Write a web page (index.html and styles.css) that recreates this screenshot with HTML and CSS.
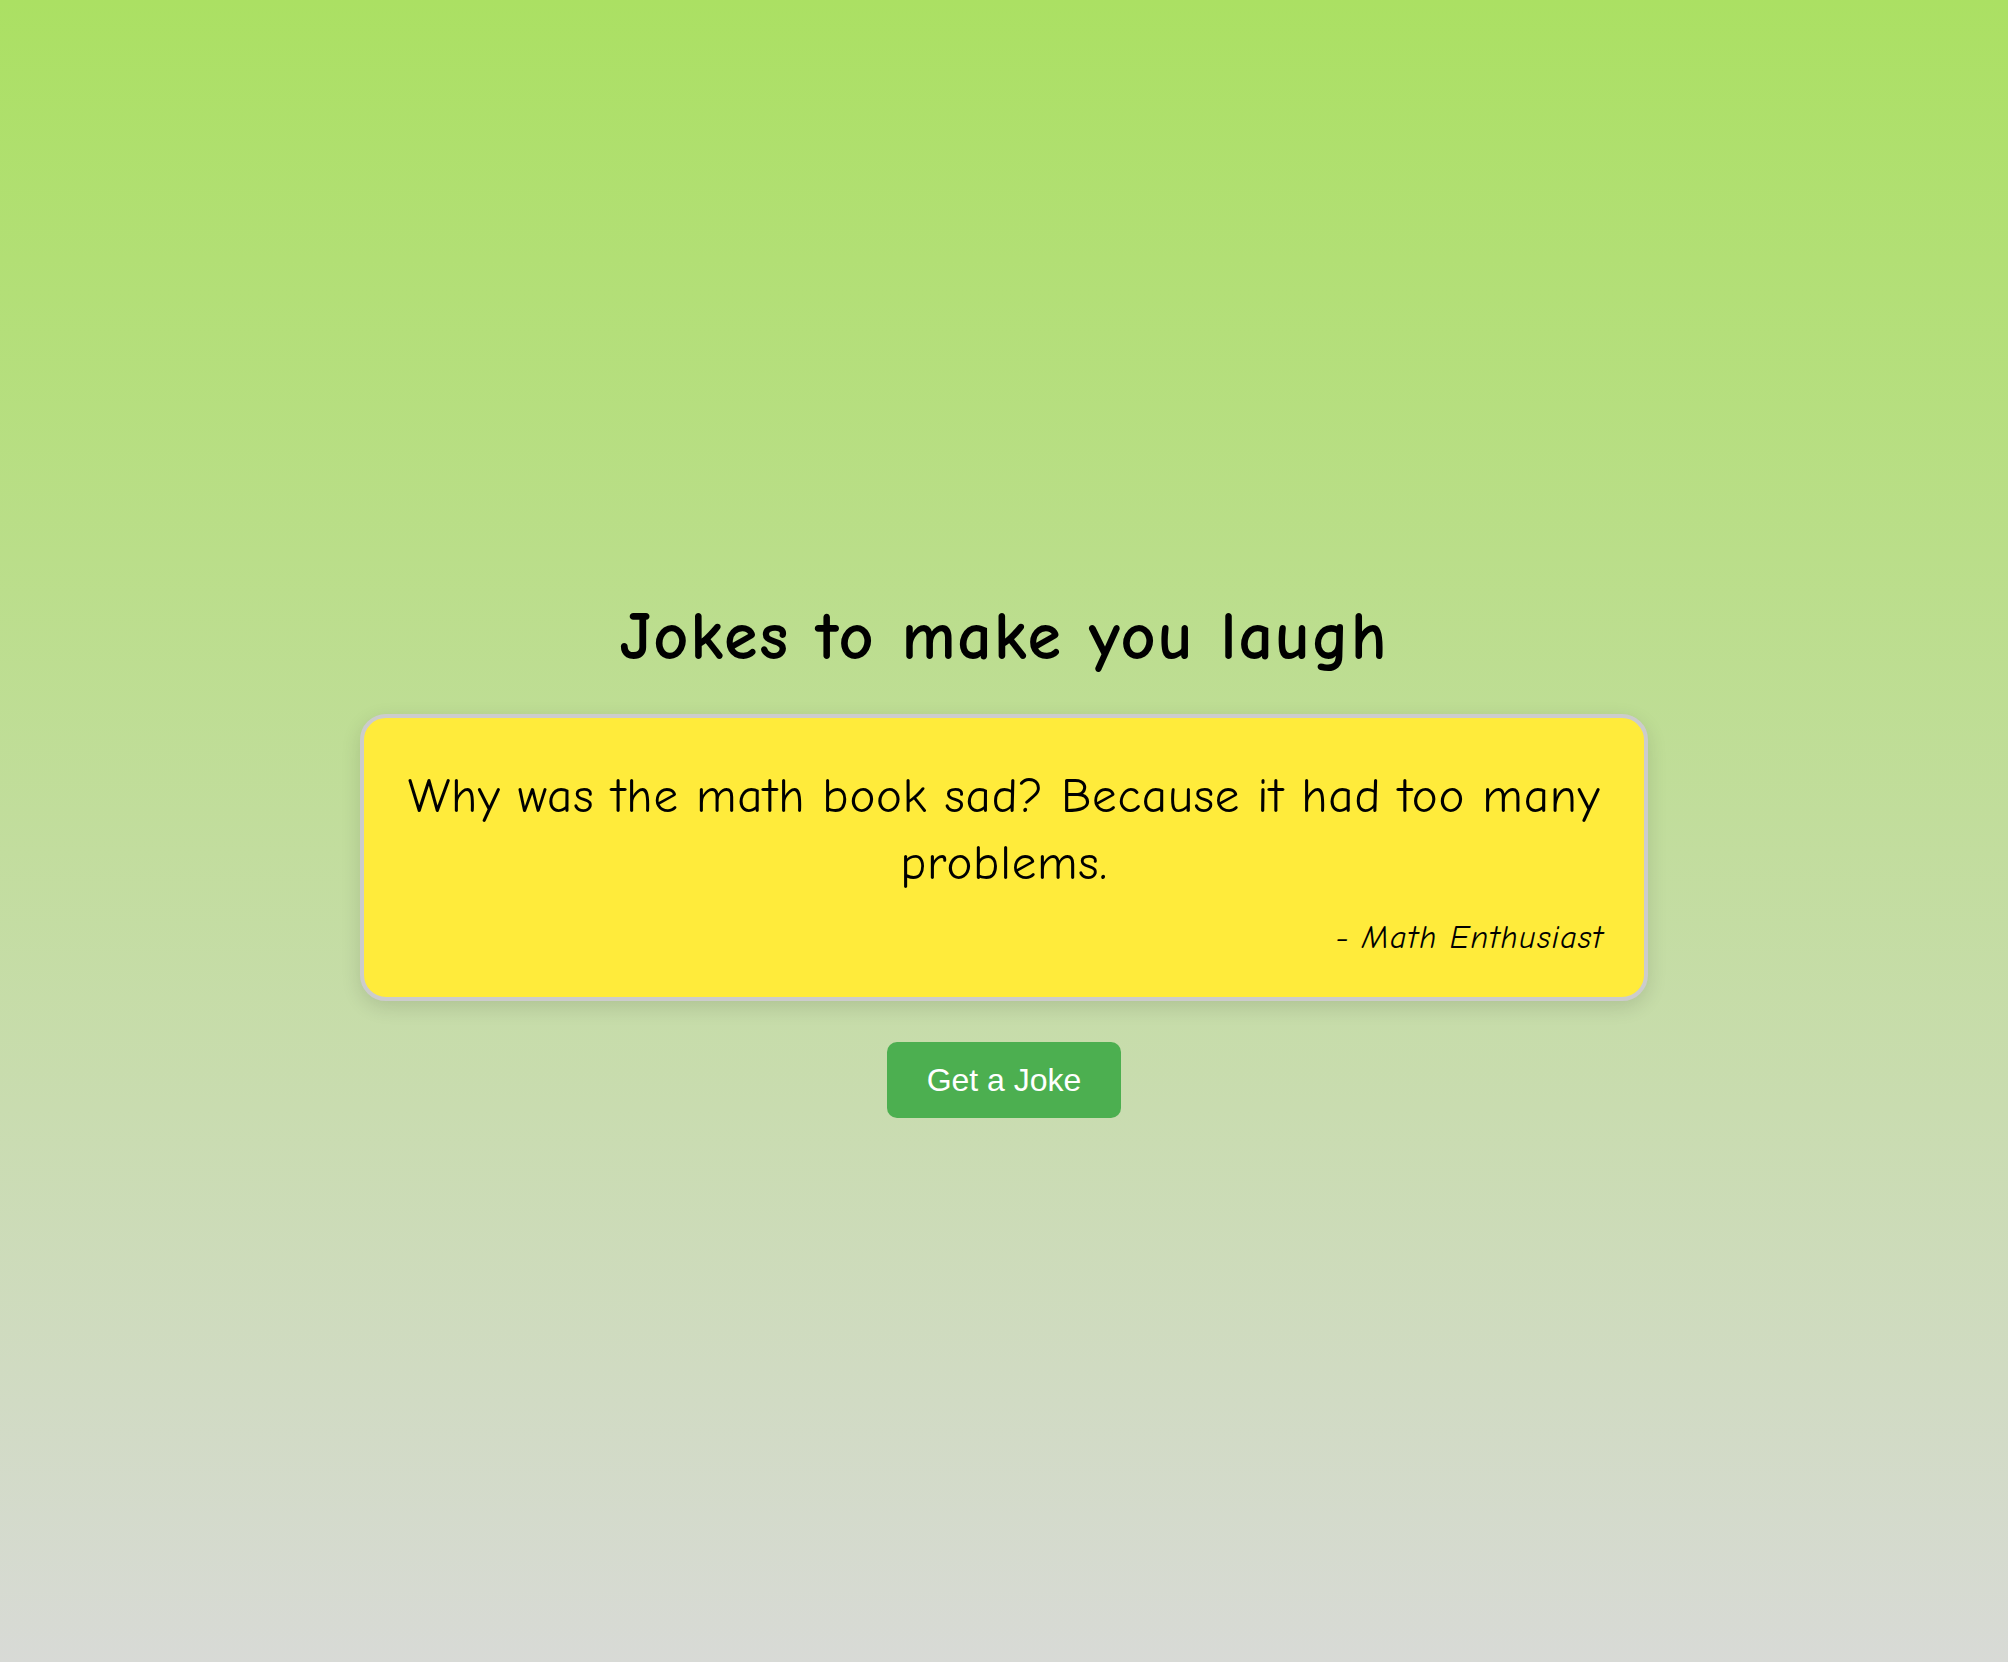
FILE: index.html
```html
<!DOCTYPE html>
<html lang="en">
<head>
<meta charset="utf-8">
<title>Jokes to make you laugh</title>
<link rel="stylesheet" href="styles.css">
</head>
<body>
<main class="page">
  <h1 class="title">Jokes to make you laugh</h1>
  <section class="card">
    <p class="joke">Why was the math book sad? Because it had too many problems.</p>
    <p class="author">- Math Enthusiast</p>
  </section>
  <button class="btn" type="button">Get a Joke</button>
</main>
</body>
</html>
```

FILE: styles.css
```css
html, body {
  margin: 0;
  padding: 0;
}
body {
  min-height: 100vh;
  background: linear-gradient(to bottom, #abe063, #d8dad6);
  font-family: "Comic Sans MS", "Comic Neue", "Open Sans", sans-serif;
  color: #000;
}
.page {
  min-height: 100vh;
  display: flex;
  flex-direction: column;
  align-items: center;
  justify-content: center;
}
.title {
  font-size: 68px;
  font-weight: bold;
  line-height: 89px;
  letter-spacing: 1.8px;
  margin: 48px 0 32px;
  text-align: center;
}
.card {
  box-sizing: content-box;
  width: 1200px;
  padding: 45px 40px 39px;
  background: #ffeb3b;
  border: 4px solid #cccccc;
  border-radius: 26px;
  box-shadow: 0 6px 20px rgba(0, 0, 0, 0.12);
}
.joke {
  margin: 0;
  font-size: 49px;
  line-height: 67px;
  letter-spacing: 0.8px;
  text-align: center;
}
.author {
  margin: 21px 0 0;
  font-size: 32px;
  line-height: 40px;
  letter-spacing: 1.3px;
  font-style: italic;
  text-align: right;
}
.btn {
  margin-top: 41px;
  padding: 20px 40px;
  font-family: "Liberation Sans", Arial, sans-serif;
  font-size: 32px;
  line-height: 36px;
  color: #fff;
  background: #4caf50;
  border: none;
  border-radius: 10px;
  cursor: pointer;
}
```
